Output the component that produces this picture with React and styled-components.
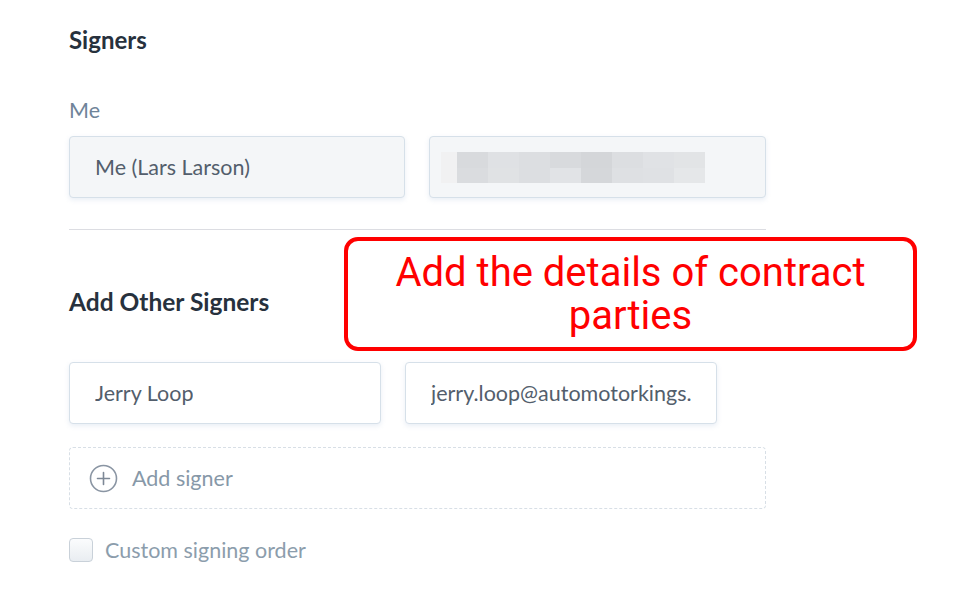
import React from "react";
import styled, { createGlobalStyle } from "styled-components";

const Global = createGlobalStyle`
  html, body { margin: 0; padding: 0; background: #fff; }
  body { font-family: "Lato", "Open Sans", sans-serif; }
`;

const Page = styled.div`
  position: relative;
  width: 959px;
  height: 611px;
  overflow: hidden;
  background: #fff;
`;

const Column = styled.div`
  width: 697px;
  padding: 26px 0 0 69px;
  display: flex;
  flex-direction: column;
`;

const Heading = styled.h2`
  margin: 0;
  font-size: ${(p) => p.$size || 24}px;
  font-weight: 700;
  color: #27313d;
  line-height: 28px;
  margin-top: ${(p) => p.$mt || 0}px;
`;

const Label = styled.div`
  margin-top: 44px;
  font-size: 21.5px;
  color: #6f8499;
  line-height: 24px;
`;

const Row = styled.div`
  display: grid;
  grid-template-columns: ${(p) => p.$cols};
  gap: 24px;
  margin-top: ${(p) => p.$mt}px;
`;

const Field = styled.div`
  box-sizing: border-box;
  height: 62px;
  border: 1px solid #d6e0e9;
  border-radius: 4px;
  background: ${(p) => (p.$muted ? "#f4f6f8" : "#fff")};
  box-shadow: 0 2px 5px rgba(120, 150, 190, 0.16);
  display: flex;
  align-items: center;
  padding: 0 25px;
  font-size: 21.5px;
  color: #535e6c;
  overflow: hidden;
`;

const FieldText = styled.span`
  white-space: nowrap;
  overflow: hidden;
`;

const Redacted = styled.div`
  display: grid;
  grid-template-columns: 16px repeat(8, 31px);
  grid-template-rows: 16px 15px;
  margin-left: -14px;
`;

const Cell = styled.div`
  background: ${(p) => p.$c};
`;

const Divider = styled.hr`
  margin: 31px 0 0 0;
  border: none;
  border-top: 1px solid #dcdde2;
`;

const DashedBox = styled.div`
  box-sizing: border-box;
  margin-top: 23px;
  height: 62px;
  border: 1px dashed #d8dfe6;
  border-radius: 4px;
  display: flex;
  align-items: center;
  padding-left: 19px;
  gap: 14px;
  font-size: 21.5px;
  color: #8798a8;
`;

const CheckRow = styled.label`
  margin-top: 29px;
  display: flex;
  align-items: center;
  gap: 12px;
  font-size: 21.5px;
  line-height: 24px;
  color: #8c9dac;
`;

const Check = styled.span`
  box-sizing: border-box;
  width: 24px;
  height: 24px;
  border: 1px solid #c9d1d9;
  border-radius: 4px;
  background: linear-gradient(#fbfcfd, #e9edf1);
`;

const Callout = styled.div`
  position: absolute;
  left: 344px;
  top: 237px;
  width: 573px;
  height: 114px;
  box-sizing: border-box;
  border: 4px solid #ff0000;
  border-radius: 14px;
  display: flex;
  align-items: center;
  justify-content: center;
  text-align: center;
  font-family: "Roboto", "Liberation Sans", sans-serif;
  font-size: 40px;
  line-height: 43px;
  color: #ff0000;
  padding: 0 20px;
`;

const redactColors = [
  "#f1f1f2", "#d8dadd", "#dfe1e4", "#dcdee1", "#d8dadd", "#d4d6d9", "#dcdee1", "#e0e2e5", "#e2e4e6",
  "#f1f1f2", "#dadcdf", "#e0e2e4", "#dcdee1", "#e1e3e6", "#d5d7da", "#dee0e3", "#dfe1e4", "#e5e7e9",
];

const PlusIcon = () => (
  <svg width="29" height="29" viewBox="0 0 29 29" fill="none">
    <circle cx="14.5" cy="14.5" r="13" stroke="#8a95a3" strokeWidth="1.6" />
    <path d="M14.5 8.5v12M8.5 14.5h12" stroke="#7d8896" strokeWidth="1.6" strokeLinecap="round" />
  </svg>
);

export default function App() {
  return (
    <Page>
      <Global />
      <Column>
        <Heading>Signers</Heading>
        <Label>Me</Label>
        <Row $cols="336px 337px" $mt={14}>
          <Field $muted>
            <FieldText>Me (Lars Larson)</FieldText>
          </Field>
          <Field $muted>
            <Redacted>
              {redactColors.map((c, i) => (
                <Cell key={i} $c={c} />
              ))}
            </Redacted>
          </Field>
        </Row>
        <Divider />
        <Heading $mt={58} $size={24.5}>Add Other Signers</Heading>
        <Row $cols="312px 312px" $mt={46}>
          <Field>
            <FieldText>Jerry Loop</FieldText>
          </Field>
          <Field>
            <FieldText>jerry.loop@automotorkings.com</FieldText>
          </Field>
        </Row>
        <DashedBox>
          <PlusIcon />
          <span>Add signer</span>
        </DashedBox>
        <CheckRow>
          <Check />
          <span>Custom signing order</span>
        </CheckRow>
      </Column>
      <Callout>Add the details of contract parties</Callout>
    </Page>
  );
}
